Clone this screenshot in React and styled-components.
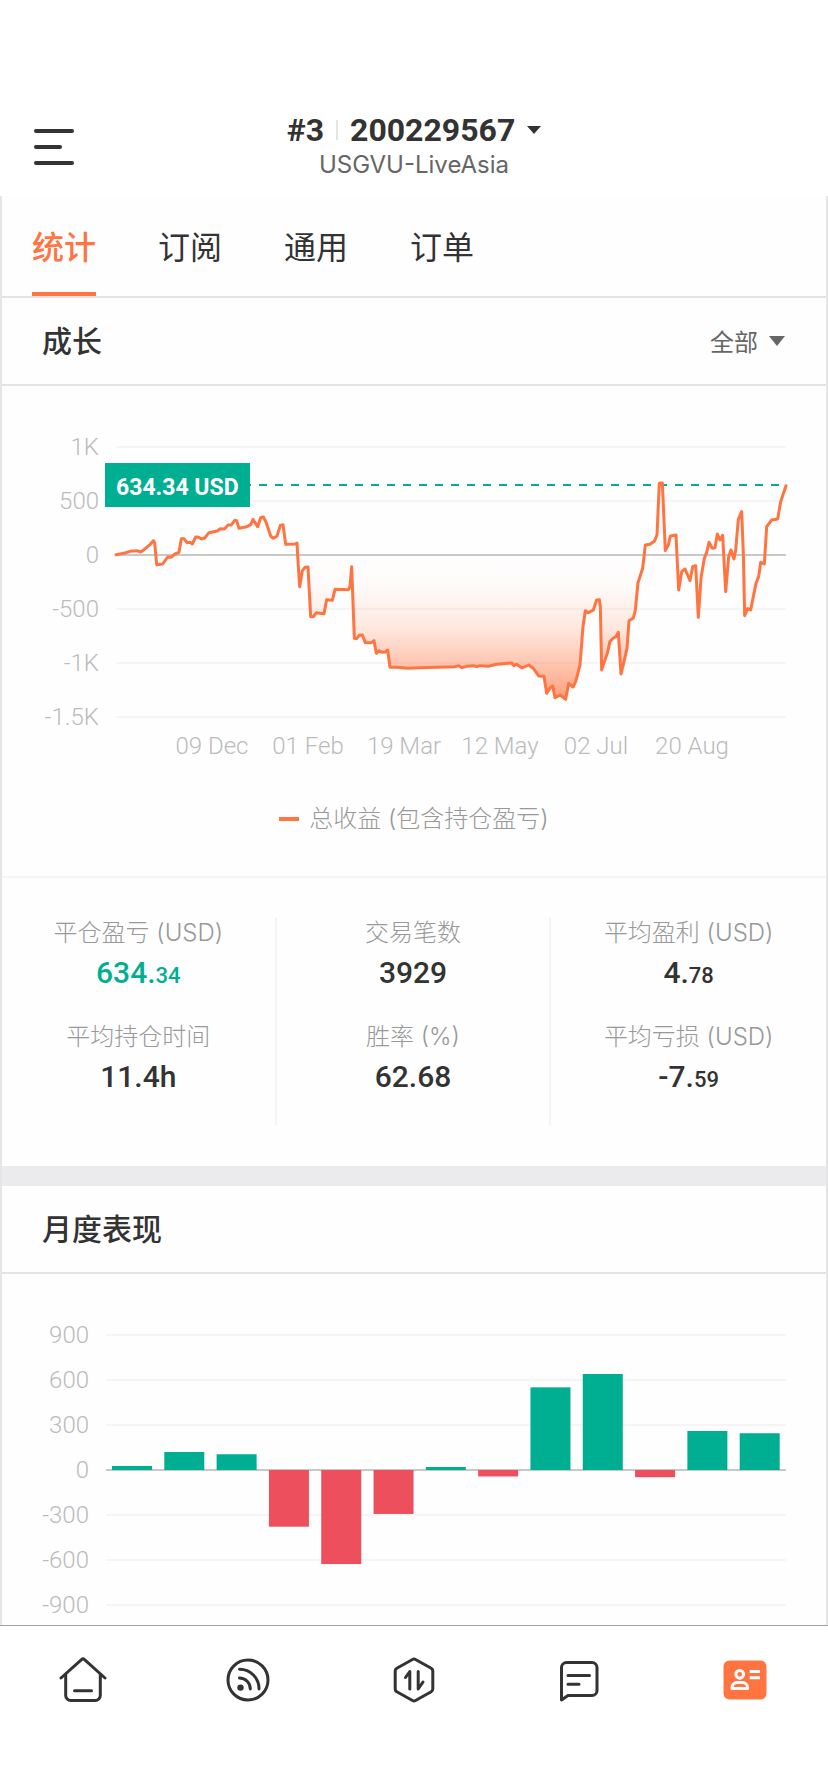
import React, { useState } from "react";
import styled, { createGlobalStyle } from "styled-components";

const GlobalStyle = createGlobalStyle`
  * {
    box-sizing: border-box;
  }
  body {
    margin: 0;
    background: #ffffff;
    color: #333333;
    font-family: Roboto, "Noto Sans CJK SC", sans-serif;
  }
  button, select {
    margin: 0;
    padding: 0;
    border: none;
    background: none;
    color: inherit;
    font-family: inherit;
    cursor: pointer;
  }
`;

const Page = styled.div`
  display: flex;
  flex-direction: column;
  height: 100vh;
`;

const Header = styled.header`
  display: grid;
  grid-template-columns: 1fr auto 1fr;
  align-items: center;
  padding: 112px 34px 15px;
`;

const MenuButton = styled.button`
  justify-self: start;
  display: flex;
`;

const Account = styled.div`
  display: flex;
  flex-direction: column;
  align-items: center;
`;

const AccountButton = styled.button`
  display: flex;
  align-items: center;
  font-size: 32px;
  font-weight: 700;
  line-height: 36px;
  .account__divider {
    width: 2px;
    height: 20px;
    margin: 0 12px;
    background: #e5e5e5;
  }
  svg {
    margin-left: 12px;
  }
`;

const Server = styled.div`
  color: #666666;
  font-family: Inter, sans-serif;
  font-size: 24px;
  line-height: 33px;
`;

const Content = styled.main`
  flex: 1;
  min-height: 0;
  overflow-y: auto;
  scrollbar-width: none;
  border: solid #e5e5e5;
  border-width: 0 2px;
  background: #fefefe;
`;

const Tabs = styled.div`
  display: flex;
  gap: 62px;
  padding: 0 30px;
  border-bottom: 2px solid #e3e3e3;
`;

const Tab = styled.button`
  height: 100px;
  padding-top: 2px;
  border-bottom: 4px solid ${({ $active }) => ($active ? "#ff7441" : "transparent")};
  color: ${({ $active }) => ($active ? "#ff7441" : "#333333")};
  font-size: 32px;
  font-weight: ${({ $active }) => ($active ? 500 : 400)};
`;

const SectionHeader = styled.div`
  display: flex;
  align-items: center;
  justify-content: space-between;
  height: 88px;
  padding: 0 40px;
  border-bottom: 2px solid #e3e3e3;
  h2 {
    margin: 0;
    padding-bottom: 4px;
    font-size: 30px;
    font-weight: 500;
  }
`;

const Period = styled.label`
  display: flex;
  align-items: center;
  gap: 10px;
  color: #666666;
  select {
    appearance: none;
    padding-top: 4px;
    font-size: 24px;
  }
`;

const ChartRow = styled.div`
  display: flex;
  gap: 17px;
  padding: ${({ $top }) => $top}px 40px 0;
`;

const Axis = styled.div`
  flex: none;
  display: flex;
  flex-direction: column;
  align-items: flex-end;
  width: ${({ $width }) => $width}px;
  color: #bbbbbb;
  font-size: 24px;
  font-weight: 300;
  line-height: ${({ $step }) => $step}px;
  white-space: nowrap;
`;

const Plot = styled.div`
  position: relative;
  flex: 1;
  min-width: 0;
  margin-top: ${({ $top }) => $top}px;
  svg {
    display: block;
    width: 100%;
    height: 270px;
    overflow: visible;
  }
  line, polyline {
    vector-effect: non-scaling-stroke;
  }
`;

const ValueTag = styled.div`
  position: absolute;
  top: 16px;
  left: -11px;
  height: 44px;
  padding: 5px 11px 0;
  background: #00ae92;
  color: #ffffff;
  font-size: 23px;
  font-weight: 700;
  line-height: 40px;
`;

const Dates = styled.div`
  display: flex;
  padding: 17px 46px 0 48px;
  color: #bbbbbb;
  font-size: 24px;
  font-weight: 300;
  line-height: 24px;
  span {
    flex: 1;
    text-align: center;
    white-space: nowrap;
  }
`;

const Legend = styled.div`
  display: flex;
  align-items: center;
  justify-content: center;
  gap: 10px;
  padding: 45px 0 41px;
  border-bottom: 2px solid #f5f5f5;
  color: #999999;
  font-family: Inter, "Noto Sans CJK SC", sans-serif;
  font-size: 24px;
  font-weight: 300;
  line-height: 32px;
  i {
    width: 20px;
    height: 4px;
    background: #ff7441;
  }
`;

const Stats = styled.div`
  display: grid;
  grid-template-columns: repeat(3, 1fr);
  padding: 39px 0 40px;
`;

const StatColumn = styled.dl`
  display: flex;
  flex-direction: column;
  gap: 28px;
  margin: 0;
  padding-bottom: 29px;
  text-align: center;
  &:not(:last-child) {
    border-right: 2px solid #f5f5f5;
  }
  dt {
    height: 32px;
    margin-bottom: 4px;
    color: #999999;
    font-family: Inter, "Noto Sans CJK SC", sans-serif;
    font-size: 24px;
    font-weight: 300;
    line-height: 32px;
  }
`;

const StatValue = styled.dd`
  height: 40px;
  margin: 0;
  color: ${({ $profit }) => ($profit ? "#00ae92" : "#333333")};
  font-size: 30px;
  font-weight: 500;
  line-height: 40px;
  small {
    font-size: 22px;
    line-height: 22px;
  }
`;

const Divider = styled.div`
  height: 20px;
  background: #ebebed;
`;

const TabBar = styled.nav`
  display: flex;
  height: 167px;
  padding-top: 30px;
  border-top: 1px solid #a0a0a0;
`;

const TabBarLink = styled.a`
  flex: 1;
  display: flex;
  justify-content: center;
  svg {
    width: 48px;
    height: 48px;
    fill: none;
    stroke: #333333;
    stroke-width: 3;
    stroke-linecap: round;
    stroke-linejoin: round;
  }
`;

const tabs = ["统计", "订阅", "通用", "订单"];

const dates = ["09 Dec", "01 Feb", "19 Mar", "12 May", "02 Jul", "20 Aug"];

const stats = [
  [
    { label: "平仓盈亏 (USD)", value: "634.", cents: "34", profit: true },
    { label: "平均持仓时间", value: "11.4h" },
  ],
  [
    { label: "交易笔数", value: "3929" },
    { label: "胜率 (%)", value: "62.68" },
  ],
  [
    { label: "平均盈利 (USD)", value: "4.", cents: "78" },
    { label: "平均亏损 (USD)", value: "-7.", cents: "59" },
  ],
];

const months = [27, 120, 105, -378, -627, -293, 20, -43, 551, 640, -48, 260, 245];

// 2010 x 810 units, zero profit at y = 324
const growth =
  "0,323 27,318 42,313 62,311 74,315 84,308 102,293 112,281 116,287 122,353 140,351 155,330 165,331 177,321 189,316 196,275 204,275 213,287 222,286 229,291 239,270 248,271 256,276 266,273 279,257 304,252 313,245 325,246 336,234 346,234 356,220 362,221 369,244 392,239 404,233 411,217 425,239 434,212 442,210 450,225 464,267 472,274 483,267 493,235 501,233 509,292 538,291 543,288 547,359 551,419 559,371 567,361 576,360 584,509 592,509 601,497 624,500 632,458 649,460 657,427 697,428 702,419 707,359 715,574 722,575 730,565 739,564 748,587 766,587 774,581 781,619 789,611 799,616 808,615 815,609 822,661 842,661 877,664 912,662 " +
  "1017,659 1028,656 1038,662 1052,658 1072,656 1082,659 1092,656 1117,658 1142,652 1187,648 1194,656 1202,652 1218,663 1238,654 1252,664 1268,687 1284,688 1292,739 1302,723 1310,717 1317,752 1333,744 1349,757 1358,709 1371,720 1379,704 1392,654 1401,539 1408,491 1417,497 1432,489 1442,459 1450,458 1453,479 1457,669 1465,644 1474,619 1482,583 1492,573 1500,569 1507,556 1515,681 1524,644 1533,604 1539,521 1552,513 1558,489 1566,407 1580,364 1588,294 1602,292 1615,283 1623,264 1630,109 1639,108 1648,311 1657,294 1663,267 1680,264 1688,429 1697,374 1707,366 1722,401 1730,359 1739,356 1747,511 1755,394 1765,334 1772,316 1779,286 1789,304 1797,302 1804,261 1812,279 1820,265 1829,434 1838,329 1845,309 1854,336 1859,309 1867,217 1877,194 1882,319 1886,506 1895,485 1904,489 1912,449 1920,409 1928,389 1934,346 1945,351 1952,239 1967,219 1985,216 1994,164 2010,116";

function GrowthChart() {
  return (
    <ChartRow $top={34}>
      <Axis $width={57} $step={54}>
        {["1K", "500", "0", "-500", "-1K", "-1.5K"].map((label) => (
          <span key={label}>{label}</span>
        ))}
      </Axis>
      <Plot $top={27}>
        <svg viewBox="0 0 2010 810" preserveAspectRatio="none">
          <defs>
            <linearGradient id="loss" gradientUnits="userSpaceOnUse" x1="0" y1="324" x2="0" y2="760">
              <stop offset="0" stopColor="#ff7441" stopOpacity="0" />
              <stop offset="0.2" stopColor="#ff7441" stopOpacity="0.02" />
              <stop offset="0.5" stopColor="#ff7441" stopOpacity="0.16" />
              <stop offset="0.78" stopColor="#ff7441" stopOpacity="0.44" />
              <stop offset="1" stopColor="#ff7441" stopOpacity="0.7" />
            </linearGradient>
          </defs>
          {[0, 162, 486, 648, 810].map((y) => (
            <line key={y} x1="0" x2="2010" y1={y} y2={y} stroke="#f5f5f5" strokeWidth="2" />
          ))}
          <polygon points={`0,324 ${growth} 2010,324`} fill="url(#loss)" />
          <line x1="0" x2="2010" y1="324" y2="324" stroke="#c8c8c8" strokeWidth="2" />
          <line x1="381" x2="2010" y1="114" y2="114" stroke="#00ae92" strokeWidth="2" strokeDasharray="8 8" />
          <polyline points={growth} fill="none" stroke="#ff7441" strokeWidth="3" strokeLinejoin="round" strokeLinecap="round" />
        </svg>
        <ValueTag>634.34 USD</ValueTag>
        <Dates>
          {dates.map((date) => (
            <span key={date}>{date}</span>
          ))}
        </Dates>
      </Plot>
    </ChartRow>
  );
}

function MonthlyChart() {
  const step = 680 / months.length;
  return (
    <ChartRow $top={39}>
      <Axis $width={47} $step={45}>
        {[900, 600, 300, 0, -300, -600, -900].map((label) => (
          <span key={label}>{label}</span>
        ))}
      </Axis>
      <Plot $top={22}>
        <svg viewBox="0 0 680 270" preserveAspectRatio="none">
          {[0, 45, 90, 180, 225, 270].map((y) => (
            <line key={y} x1="0" x2="680" y1={y} y2={y} stroke="#f5f5f5" strokeWidth="2" />
          ))}
          <line x1="0" x2="680" y1="135" y2="135" stroke="#c8c8c8" strokeWidth="2" />
          {months.map((value, i) => (
            <rect
              key={i}
              x={step * i + 6}
              y={value > 0 ? 135 - value * 0.15 : 135}
              width="40"
              height={Math.abs(value) * 0.15}
              fill={value > 0 ? "#00ae92" : "#ed4f5d"}
            />
          ))}
        </svg>
      </Plot>
    </ChartRow>
  );
}

function BottomBar() {
  return (
    <TabBar>
      <TabBarLink href="#home" aria-label="Home">
        <svg viewBox="0 0 48 48">
          <path d="M2 22 22.500 3.600a2.200 2.200 0 0 1 3 0L46 22" />
          <path d="M6.700 18.500V39.500a5 5 0 0 0 5 5H36.300a5 5 0 0 0 5-5V18.500M15.500 34.700H32.500" />
        </svg>
      </TabBarLink>
      <TabBarLink href="#signals" aria-label="Signals">
        <svg viewBox="0 0 48 48">
          <circle cx="24" cy="24" r="20" />
          <circle cx="16.500" cy="31.600" r="3.200" fill="#333333" stroke="none" />
          <path d="M15.500 22A10.800 10.800 0 0 1 26.300 33M15.500 13.300A19.400 19.400 0 0 1 35 33" />
        </svg>
      </TabBarLink>
      <TabBarLink href="#trade" aria-label="Trade">
        <svg viewBox="0 0 48 48">
          <path d="M22.500 3.500a3 3 0 0 1 3 0L41.200 12.300a3 3 0 0 1 1.600 2.600V33.100a3 3 0 0 1-1.600 2.600L25.500 44.500a3 3 0 0 1-3 0L6.800 35.700a3 3 0 0 1-1.600-2.600V14.900a3 3 0 0 1 1.600-2.600Z" />
          <path d="M15.500 21.500 19.800 15.500V33M28.200 15.500V33L33 26" />
        </svg>
      </TabBarLink>
      <TabBarLink href="#messages" aria-label="Messages">
        <svg viewBox="0 0 48 48">
          <path d="M5.500 44V11.500a5 5 0 0 1 5-5H36a5 5 0 0 1 5 5V34.500a5 5 0 0 1-5 5H12Z" />
          <path d="M12 19.400H33.500M12 28.200H23" />
        </svg>
      </TabBarLink>
      <TabBarLink href="#account" aria-label="Account">
        <svg viewBox="0 0 48 48">
          <rect x="2.500" y="4.500" width="43" height="39" rx="6" fill="#ff7441" stroke="none" />
          <g stroke="#ffffff">
            <circle cx="18.700" cy="18.300" r="3.900" />
            <path d="M11 32.500V31.500a5 5 0 0 1 5-5H21.500a5 5 0 0 1 5 5V32.500Z" />
            <path d="M30.200 15.400H37.500M30.200 21.700H37.500" strokeLinecap="square" />
          </g>
        </svg>
      </TabBarLink>
    </TabBar>
  );
}

function App() {
  const [tab, setTab] = useState("统计");

  return (
    <Page>
      <GlobalStyle />
      <Header>
        <MenuButton aria-label="Menu">
          <svg width="40" height="36" stroke="#333333" strokeWidth="4" strokeLinecap="round">
            <path d="M2 2H38M2 18H26M2 34H38" />
          </svg>
        </MenuButton>
        <Account>
          <AccountButton>
            #3
            <span className="account__divider" />
            200229567
            <svg width="14" height="8" fill="#333333">
              <path d="M0 0H14L7 8Z" />
            </svg>
          </AccountButton>
          <Server>USGVU-LiveAsia</Server>
        </Account>
      </Header>
      <Content>
        <Tabs role="tablist">
          {tabs.map((name) => (
            <Tab
              key={name}
              role="tab"
              aria-selected={name === tab}
              $active={name === tab}
              onClick={() => setTab(name)}
            >
              {name}
            </Tab>
          ))}
        </Tabs>
        <section>
          <SectionHeader>
            <h2>成长</h2>
            <Period htmlFor="period">
              <select id="period" aria-label="成长">
                <option>全部</option>
              </select>
              <svg width="18" height="10" fill="#666666">
                <path d="M1 0H17L9 10Z" />
              </svg>
            </Period>
          </SectionHeader>
          <GrowthChart />
          <Legend>
            <i />
            总收益 (包含持仓盈亏)
          </Legend>
          <Stats>
            {stats.map((column, i) => (
              <StatColumn key={i}>
                {column.map(({ label, value, cents, profit }) => (
                  <div key={label}>
                    <dt>{label}</dt>
                    <StatValue $profit={profit}>
                      {value}
                      {cents && <small>{cents}</small>}
                    </StatValue>
                  </div>
                ))}
              </StatColumn>
            ))}
          </Stats>
        </section>
        <Divider />
        <section>
          <SectionHeader>
            <h2>月度表现</h2>
          </SectionHeader>
          <MonthlyChart />
        </section>
      </Content>
      <BottomBar />
    </Page>
  );
}

export default App;
